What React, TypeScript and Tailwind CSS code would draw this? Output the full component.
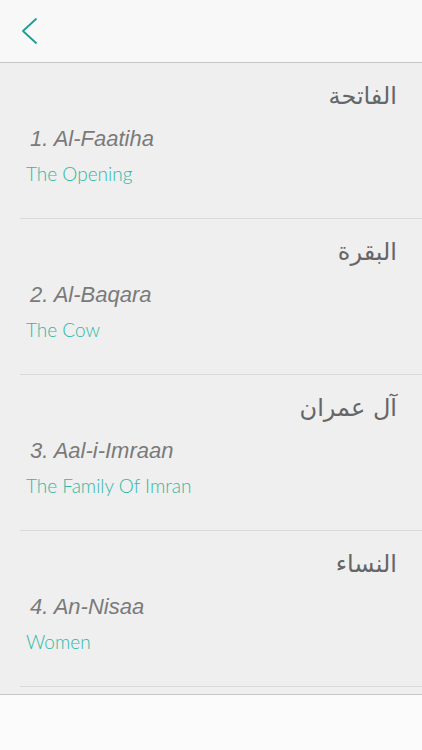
import React from 'react';

const surahs = [
    { ar: 'الفاتحة', en: '1. Al-Faatiha', tr: 'The Opening' },
    { ar: 'البقرة', en: '2. Al-Baqara', tr: 'The Cow' },
    { ar: 'آل عمران', en: '3. Aal-i-Imraan', tr: 'The Family Of Imran' },
    { ar: 'النساء', en: '4. An-Nisaa', tr: 'Women' },
];

const App = () => {
    return (
        <div className="w-[422px] h-[750px] bg-[#fbfbfb] overflow-hidden">
            <div className="h-[63px] bg-[#f8f8f8] border-b border-[#c6c6c6] flex items-center pl-[20px]">
                <svg width="18" height="28" viewBox="0 0 18 28" fill="none">
                    <path d="M16 2 L3 14 L16 26" stroke="#1a9e94" strokeWidth="1.8" strokeLinecap="round" strokeLinejoin="round" />
                </svg>
            </div>
            <div className="bg-[#efefef] border-b border-[#c6c6c6] pb-[7px]">
                {surahs.map((s) => (
                    <div key={s.en} className="ml-5 h-[156px] border-b border-[#d9d9d9] pt-[17px]">
                        <div
                            dir="rtl"
                            className="pr-[25px] text-[24px] leading-[32px] text-[#666666] font-['DejaVu_Sans',sans-serif]"
                        >
                            {s.ar}
                        </div>
                        <div className="mt-[13px] pl-[10px] text-[22px] leading-[28px] italic text-[#7a7a7a] font-['Liberation_Sans',sans-serif]">
                            {s.en}
                        </div>
                        <div className="mt-[8px] pl-[6px] text-[19px] leading-[26px] font-light text-[#2fb8a6] font-['Lato',sans-serif]">
                            {s.tr}
                        </div>
                    </div>
                ))}
            </div>
        </div>
    );
};

export default App;
